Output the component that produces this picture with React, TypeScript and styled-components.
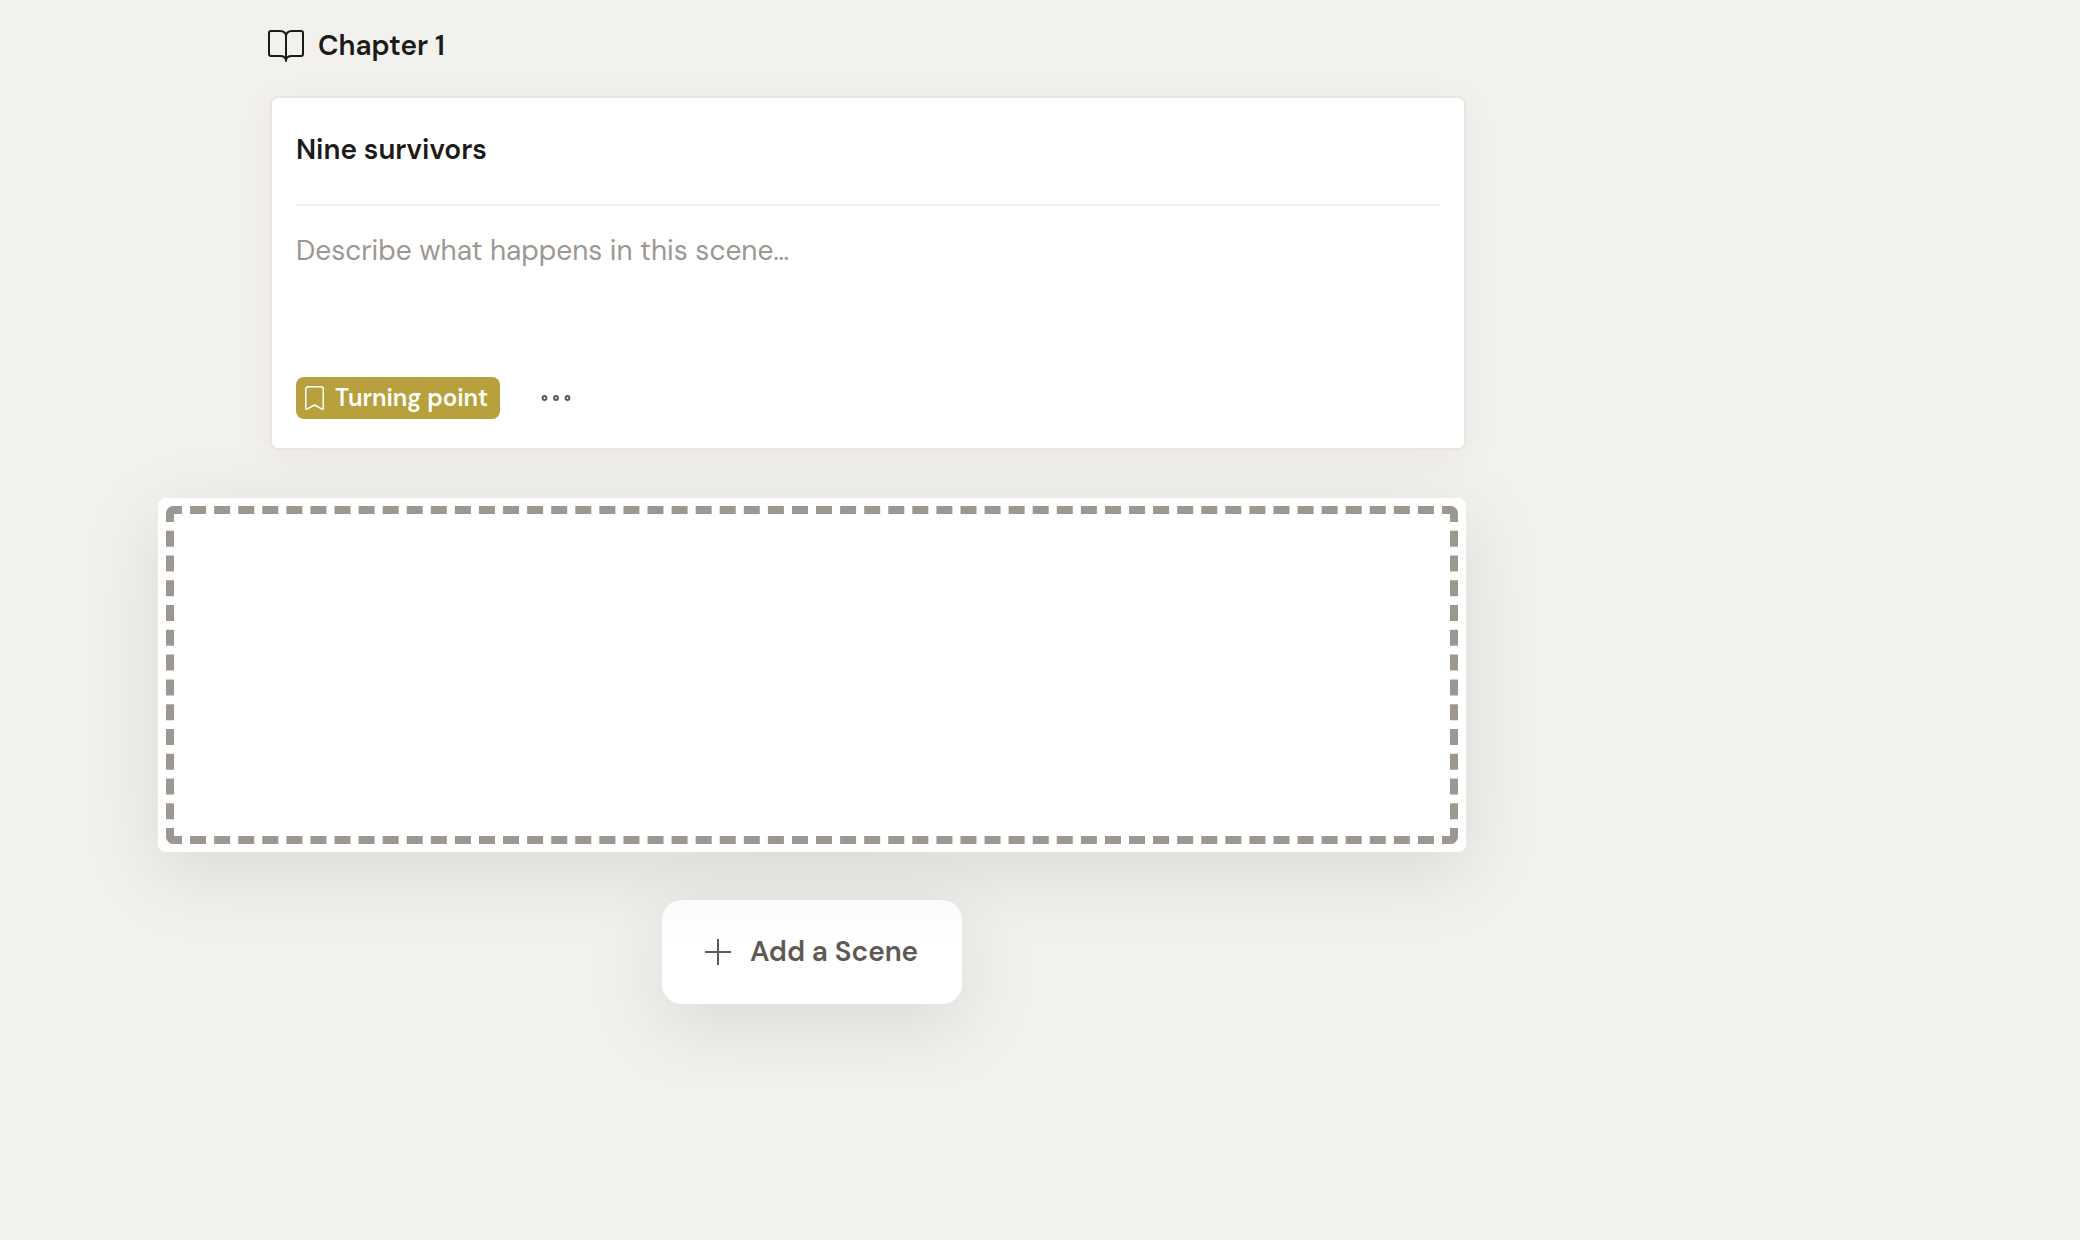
import React, { useState } from "react";
import styled, { createGlobalStyle } from "styled-components";

const GlobalStyle = createGlobalStyle`
  *, *::before, *::after { box-sizing: border-box; }
  body {
    margin: 0;
    background: #f2f1ed;
    color: #1c1b1a;
    font-family: "DM Sans", Inter, "Liberation Sans", sans-serif;
    font-size: 28px;
    line-height: 36px;
    -webkit-font-smoothing: antialiased;
  }
  button, input, textarea { font: inherit; color: inherit; border: 0; margin: 0; padding: 0; background: none; }
  button { cursor: pointer; }
`;

const Page = styled.main`
  display: flex;
  flex-direction: column;
  gap: 48px;
  max-width: 1466px;
  padding: 28px 0 80px 158px;
`;

const Chapter = styled.section`
  display: flex;
  flex-direction: column;
  gap: 32px;
  padding-left: 112px;
`;

const ChapterHeading = styled.h2`
  display: flex;
  align-items: center;
  gap: 14px;
  margin: 0 0 0 -2px;
  font-size: 28px;
  font-weight: 600;
`;

const SceneCard = styled.article`
  display: flex;
  flex-direction: column;
  padding: 32px 24px 29px;
  background: #fff;
  border: 2px solid #e8e5e2;
  border-radius: 8px;
  box-shadow: 0 8px 40px rgba(0, 0, 0, 0.04);
`;

const SceneTitle = styled.input`
  width: 100%;
  height: 38px;
  font-weight: 600;
  outline: none;
`;

const Divider = styled.hr`
  width: 100%;
  height: 2px;
  margin: 36px 0 27px;
  border: 0;
  background: #f1f1f1;
`;

const Description = styled.textarea`
  display: block;
  width: 100%;
  height: 108px;
  resize: none;
  outline: none;
  &::placeholder { color: #9d9792; opacity: 1; }
`;

const CardFooter = styled.footer`
  display: flex;
  align-items: center;
  gap: 40px;
  margin-top: 36px;
`;

const Tag = styled.button`
  display: flex;
  align-items: center;
  gap: 10px;
  height: 42px;
  padding: 0 12px 0 8px;
  border-radius: 8px;
  background: #b8a13c;
  color: #fff;
  font-size: 24px;
  line-height: 32px;
  font-weight: 600;
`;

const MoreButton = styled.button`
  display: flex;
  color: #5f5853;
`;

const DropSlot = styled.div`
  height: 354px;
  padding: 8px;
  background: #fff;
  border-radius: 8px;
  box-shadow: 0 20px 80px rgba(0, 0, 0, 0.1);
`;

const DropOutline = styled.div`
  height: 100%;
  border: 8px dashed #9d9792;
  border-radius: 8px;
`;

const AddScene = styled.button`
  display: flex;
  align-items: center;
  align-self: center;
  gap: 19px;
  min-width: 300px;
  height: 104px;
  padding: 0 43px;
  border-radius: 20px;
  background: linear-gradient(#fbfbfb, #fff 40%);
  box-shadow: 0 20px 80px rgba(0, 0, 0, 0.1);
  color: #5f5853;
  font-weight: 600;
`;

const BookIcon = () => (
  <svg width="36" height="34" viewBox="0 0 36 34" fill="none" stroke="currentColor" strokeWidth="2" strokeLinecap="round" strokeLinejoin="round" aria-hidden="true">
    <path d="M18 7.500v24.500M18 7.500c0-3.500-2.500-5.500-6-5.500H3a2 2 0 0 0-2 2v21a2 2 0 0 0 2 2h9c3.500 0 6 1.500 6 4.500 0-3 2.500-4.500 6-4.500h9a2 2 0 0 0 2-2V4a2 2 0 0 0-2-2h-9c-3.500 0-6 2-6 5.500z" />
  </svg>
);

const BookmarkIcon = () => (
  <svg width="21" height="26" viewBox="0 0 21 26" fill="none" stroke="currentColor" strokeWidth="1.500" strokeLinejoin="round" aria-hidden="true">
    <path d="M4 1.750h13a2.250 2.250 0 0 1 2.250 2.250v19.500q0 1.200-1.200.6L10.500 20l-7.550 4.100q-1.200.6-1.200-.6V4A2.250 2.250 0 0 1 4 1.750z" />
  </svg>
);

const DotsIcon = () => (
  <svg width="32" height="32" viewBox="0 0 32 32" fill="none" stroke="currentColor" strokeWidth="2" aria-hidden="true">
    <circle cx="4.500" cy="16" r="1.900" />
    <circle cx="16" cy="16" r="1.900" />
    <circle cx="27.500" cy="16" r="1.900" />
  </svg>
);

const PlusIcon = () => (
  <svg width="26" height="26" viewBox="0 0 26 26" stroke="currentColor" strokeWidth="2" aria-hidden="true">
    <path d="M13 0v26M0 13h26" />
  </svg>
);

export default function App() {
  const [title, setTitle] = useState("Nine survivors");
  const [description, setDescription] = useState("");

  return (
    <>
      <GlobalStyle />
      <Page>
        <Chapter>
          <ChapterHeading>
            <BookIcon />
            Chapter 1
          </ChapterHeading>
          <SceneCard>
            <SceneTitle aria-label="Scene title" value={title} onChange={(e) => setTitle(e.target.value)} />
            <Divider />
            <Description
              aria-label="Scene description"
              placeholder="Describe what happens in this scene…"
              value={description}
              onChange={(e) => setDescription(e.target.value)}
            />
            <CardFooter>
              <Tag type="button">
                <BookmarkIcon />
                Turning point
              </Tag>
              <MoreButton type="button" aria-label="More options">
                <DotsIcon />
              </MoreButton>
            </CardFooter>
          </SceneCard>
        </Chapter>
        <DropSlot>
          <DropOutline />
        </DropSlot>
        <AddScene type="button">
          <PlusIcon />
          Add a Scene
        </AddScene>
      </Page>
    </>
  );
}
